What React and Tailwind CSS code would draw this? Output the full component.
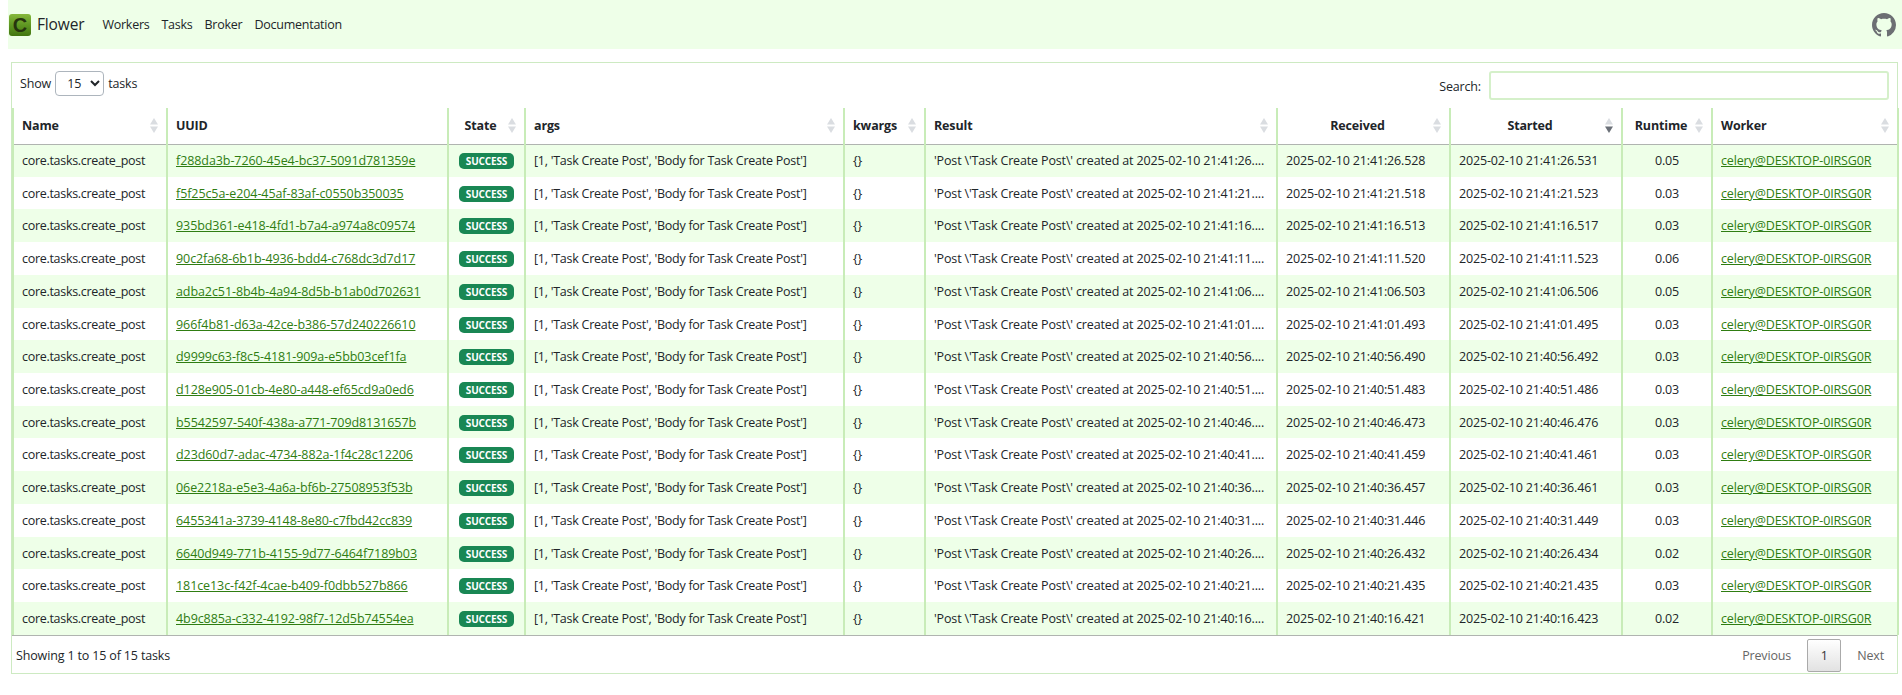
import React from "react";
import { BsGithub } from "react-icons/bs";

const rows = [
  ["f288da3b-7260-45e4-bc37-5091d781359e", "21:41:26", "21:41:26.528", "21:41:26.531", "0.05"],
  ["f5f25c5a-e204-45af-83af-c0550b350035", "21:41:21", "21:41:21.518", "21:41:21.523", "0.03"],
  ["935bd361-e418-4fd1-b7a4-a974a8c09574", "21:41:16", "21:41:16.513", "21:41:16.517", "0.03"],
  ["90c2fa68-6b1b-4936-bdd4-c768dc3d7d17", "21:41:11", "21:41:11.520", "21:41:11.523", "0.06"],
  ["adba2c51-8b4b-4a94-8d5b-b1ab0d702631", "21:41:06", "21:41:06.503", "21:41:06.506", "0.05"],
  ["966f4b81-d63a-42ce-b386-57d240226610", "21:41:01", "21:41:01.493", "21:41:01.495", "0.03"],
  ["d9999c63-f8c5-4181-909a-e5bb03cef1fa", "21:40:56", "21:40:56.490", "21:40:56.492", "0.03"],
  ["d128e905-01cb-4e80-a448-ef65cd9a0ed6", "21:40:51", "21:40:51.483", "21:40:51.486", "0.03"],
  ["b5542597-540f-438a-a771-709d8131657b", "21:40:46", "21:40:46.473", "21:40:46.476", "0.03"],
  ["d23d60d7-adac-4734-882a-1f4c28c12206", "21:40:41", "21:40:41.459", "21:40:41.461", "0.03"],
  ["06e2218a-e5e3-4a6a-bf6b-27508953f53b", "21:40:36", "21:40:36.457", "21:40:36.461", "0.03"],
  ["6455341a-3739-4148-8e80-c7fbd42cc839", "21:40:31", "21:40:31.446", "21:40:31.449", "0.03"],
  ["6640d949-771b-4155-9d77-6464f7189b03", "21:40:26", "21:40:26.432", "21:40:26.434", "0.02"],
  ["181ce13c-f42f-4cae-b409-f0dbb527b866", "21:40:21", "21:40:21.435", "21:40:21.435", "0.03"],
  ["4b9c885a-c332-4192-98f7-12d5b74554ea", "21:40:16", "21:40:16.421", "21:40:16.423", "0.02"],
];

const columns = [
  { label: "Name", width: "w-[154px]" },
  { label: "UUID", width: "w-[281px]", noSort: true },
  { label: "State", width: "w-[77px]", center: true },
  { label: "args", width: "w-[319px]" },
  { label: "kwargs", width: "w-[81px]" },
  { label: "Result", width: "w-[352px]" },
  { label: "Received", width: "w-[173px]", center: true },
  { label: "Started", width: "w-[172px]", center: true, active: true },
  { label: "Runtime", width: "w-[90px]", center: true },
  { label: "Worker", width: "w-[186px]" },
];

const SortArrows = ({ active }) => (
  <svg viewBox="0 0 8 15" className="absolute right-[8px] top-[10px] h-[15px] w-[8px]">
    <path d="M4 0 L8 6.5 H0 Z" fill="#dadde1" />
    <path d="M4 15 L8 8.5 H0 Z" fill={active ? "#6b7078" : "#dadde1"} />
  </svg>
);

const cell = "border-l-2 border-[#c8ecb8] px-[8px] pt-[2px] whitespace-nowrap overflow-hidden";

export default function App() {
  return (
    <div className="min-h-[695px] bg-white font-['Open_Sans','Noto_Sans',sans-serif] text-[12.5px] tracking-[-0.15px] text-[#212529]">
      <nav className="ml-[8px] flex h-[49px] items-center bg-[#eeffe8] pl-[1px] pr-[6px]">
        <div className="flex h-[22px] w-[22px] items-center justify-center rounded-[3px] bg-gradient-to-b from-[#86b83c] via-[#5f9722] to-[#42750f] font-['Liberation_Sans',sans-serif] text-[20px] font-bold text-[#26340e]">
          C
        </div>
        <span className="ml-[6px] text-[15.5px]">Flower</span>
        <div className="ml-[18px] flex gap-[12px] pt-[2px] tracking-[-0.25px]">
          <span>Workers</span>
          <span>Tasks</span>
          <span>Broker</span>
          <span>Documentation</span>
        </div>
        <BsGithub className="ml-auto text-[24px] text-[#6c6f73]" />
      </nav>

      <div className="ml-[11px] mr-[4px] mt-[13px] h-[612px] border border-[#cdeac2]">
        <div className="flex h-[45px] items-start justify-between px-[8px] pt-[8px]">
          <div className="flex items-center gap-[4px]">
            <span className="pt-[2px]">Show</span>
            <select className="h-[25px] w-[49px] rounded-[4px] border border-[#adb5bd] bg-white pl-[7px]">
              <option>15</option>
            </select>
            <span className="pt-[2px]">tasks</span>
          </div>
          <div className="flex items-center gap-[8px]">
            <span className="pt-[3px]">Search:</span>
            <input className="h-[29px] w-[400px] rounded-[3px] border-2 border-[#d5f0ca] bg-white" />
          </div>
        </div>

        <table className="w-full table-fixed border-collapse border-r-2 border-[#c8ecb8]">
          <colgroup>
            {columns.map((c) => (
              <col key={c.label} className={c.width} />
            ))}
          </colgroup>
          <thead>
            <tr className="h-[36px] border-b border-[#b0b4b0]">
              {columns.map((c) => (
                <th key={c.label} className={`relative font-bold ${cell} ${c.center ? "pr-[20px] text-center" : "text-left"}`}>
                  {c.label}
                  {!c.noSort && <SortArrows active={c.active} />}
                </th>
              ))}
            </tr>
          </thead>
          <tbody>
            {rows.map((r, i) => (
              <tr key={r[0]} className={`h-[32.73px] ${i % 2 === 0 ? "bg-[#eeffe8]" : "bg-white"}`}>
                <td className={`${cell} tracking-[-0.3px]`}>core.tasks.create_post</td>
                <td className={`${cell} tracking-[-0.08px]`}>
                  <a className="text-[#2f7d12] underline">{r[0]}</a>
                </td>
                <td className={`${cell} text-center`}>
                  <span className="inline-block rounded-[5px] bg-[#198754] px-[7px] text-[10px] font-bold leading-[16px] text-white">SUCCESS</span>
                </td>
                <td className={`${cell} tracking-[-0.25px]`}>[1, 'Task Create Post', 'Body for Task Create Post']</td>
                <td className={cell}>{"{}"}</td>
                <td className={cell}>{`'Post \\'Task Create Post\\' created at 2025-02-10 ${r[1]}....`}</td>
                <td className={cell}>2025-02-10 {r[2]}</td>
                <td className={cell}>2025-02-10 {r[3]}</td>
                <td className={`${cell} text-center`}>{r[4]}</td>
                <td className={cell}>
                  <a className="text-[#2f7d12] underline">celery@DESKTOP-0IRSG0R</a>
                </td>
              </tr>
            ))}
          </tbody>
        </table>

        <div className="flex h-[38px] items-center justify-between border-t border-[#b0b4b0] pb-[1px] pl-[4px] pr-[13px] pt-[3px]">
          <span className="pt-[2px]">Showing 1 to 15 of 15 tasks</span>
          <div className="flex items-center text-[#666]">
            <span className="pt-[2px]">Previous</span>
            <span className="mx-[16px] flex h-[33px] w-[34px] items-center justify-center rounded-[2px] border border-[#aaa] bg-gradient-to-b from-white to-[#e2e2e2] pt-[2px] text-[#333]">1</span>
            <span className="pt-[2px]">Next</span>
          </div>
        </div>
      </div>
    </div>
  );
}
